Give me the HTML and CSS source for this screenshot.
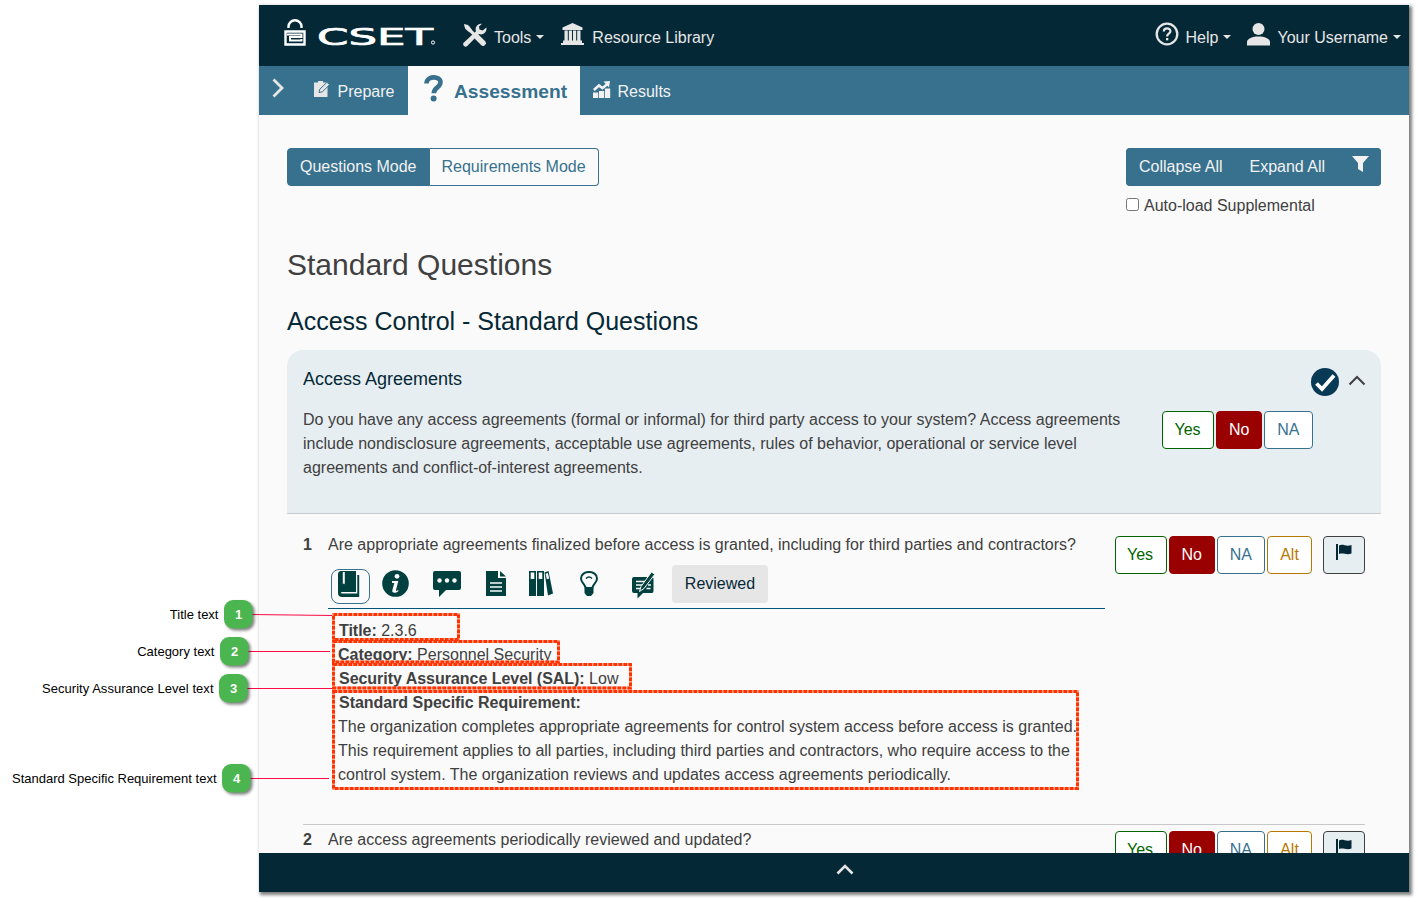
FILE: index.html
```html
<!DOCTYPE html>
<html lang="en">
<head>
<meta charset="utf-8">
<title>CSET</title>
<link rel="stylesheet" href="styles.css">
</head>
<body>
<div class="app">
  <header class="topbar">
    <svg class="lock" width="22" height="28" viewBox="0 0 22 28"><path d="M4.500 9V7.500a6.500 6.300 0 0 1 13 0V9" fill="none" stroke="#fff" stroke-width="2.400"/><path d="M1.500 12.500H20.500V25.500H1.500z" fill="none" stroke="#fff" stroke-width="2.400"/><path d="M3 15.500H17.500V18H6V21.500H17.500V20" fill="none" stroke="#fff" stroke-width="2"/></svg>
    <svg class="logo" width="120" height="24" viewBox="0 0 120 24"><text class="logo-text" x="-1" y="19" textLength="116" lengthAdjust="spacingAndGlyphs">CSET</text><circle cx="115" cy="16.500" r="1.600" fill="none" stroke="#fff"/></svg>
    <a class="menu tools">
      <svg width="24" height="24" viewBox="0 0 24 24"><path d="M1 1l4 1 3 4 12.500 12.500 2.500 2-2.500 2.500-2.500-2.500L5.500 8 2 5z" fill="#e6e6e6"/><path d="M19 .8a5.500 5.500 0 0 0-6 7.400L.9 19.400a2.400 2.400 0 0 0 3.600 3.400L16 11a5.500 5.500 0 0 0 7.300-6.500L19.700 7.600 16.500 6.600 16 3.500z" fill="#e6e6e6"/><path d="M1.500 2l4.500 1 3 4-2.500 2.500L2.500 6z" fill="#e6e6e6"/><path d="M14 14l6 6" stroke="#e6e6e6" stroke-width="5.500" stroke-linecap="round"/></svg>
      <span>Tools</span><i class="caret"></i>
    </a>
    <a class="menu library">
      <svg width="23" height="22" viewBox="0 0 23 22"><path d="M11.500 0L21.500 4.500V7H1.500V4.500zM3.500 7.500h3.300v10H3.500zM7.800 7.500h3.200v10H7.800zM12 7.500h3.200v10H12zM16.200 7.500h3.300v10h-3.300zM2 17.500h19V20H2zM0 20h23v2H0z" fill="#e6e6e6"/></svg>
      <span>Resource Library</span>
    </a>
    <div class="topbar-right">
      <a class="menu help">
        <svg width="24" height="24" viewBox="0 0 24 24"><circle cx="12" cy="12" r="10.300" fill="none" stroke="#e6e6e6" stroke-width="2.300"/><path d="M8.800 9.500c0-4.300 6.600-4.100 6.600-.3 0 2.600-3.300 2.500-3.300 5.300" fill="none" stroke="#e6e6e6" stroke-width="2.200"/><path d="M11 16h2.300v2.300H11z" fill="#e6e6e6"/></svg>
        <span>Help</span><i class="caret"></i>
      </a>
      <a class="menu user">
        <svg width="23" height="23" viewBox="0 0 23 23"><circle cx="11.500" cy="6" r="6" fill="#e6e6e6"/><path d="M0 22.500V19c0-7.500 23-7.500 23 0v3.500z" fill="#e6e6e6"/></svg>
        <span>Your Username</span><i class="caret"></i>
      </a>
    </div>
  </header>
  <nav class="tabs">
    <svg class="expand" width="12" height="20" viewBox="0 0 12 20"><path d="M1.500 1.500L10 10 1.500 18.500" fill="none" stroke="#e6e6e6" stroke-width="2.800"/></svg>
    <a class="tab prepare">
      <svg width="17" height="16" viewBox="0 0 17 16"><path d="M0 1.500h4V0h5v1.500h4.500V16H0z" fill="#e6e6e6"/><path d="M5 11.500l.8-3.300L13 1.300l2.600 2.400L8.400 10.800z" fill="#e6e6e6" stroke="#37718e" stroke-width="1"/></svg>
      <span>Prepare</span>
    </a>
    <a class="tab active">
      <svg width="19" height="27" viewBox="0 0 19 27"><path d="M2.500 8.500C2.500 .5 16.500 .5 16.500 7.300c0 5.200-6.700 5-6.700 11" fill="none" stroke="#37718e" stroke-width="4.600"/><circle cx="9.600" cy="23.500" r="3" fill="#37718e"/></svg>
      <span>Assessment</span>
    </a>
    <a class="tab results">
      <svg width="18" height="17" viewBox="0 0 18 17"><path d="M0 11.500h5.200V17H0zM6 10h5.200v7H6zM12 7.500h5.200V17H12z" fill="#f2f2f2"/><path d="M.8 9L6 4.500l3.500 2.700L14.500 3" fill="none" stroke="#f2f2f2" stroke-width="2.600"/><path d="M10.500 .6L17 0 16 6.500z" fill="#f2f2f2"/></svg>
      <span>Results</span>
    </a>
  </nav>
  <main class="content">
    <div class="toolbar">
      <div class="group"><button class="btn solid left">Questions Mode</button><button class="btn outline right">Requirements Mode</button></div>
      <div class="toolbar-right">
        <div class="group"><button class="btn solid left">Collapse All</button><button class="btn solid mid">Expand All</button><button class="btn solid right"><svg class="funnel" width="17" height="16" viewBox="0 0 17 16"><path d="M0 0h17L11 7v9L6 13V7z" fill="#f2f2f2"/></svg></button></div>
        <label class="auto"><input type="checkbox" class="check">Auto-load Supplemental</label>
      </div>
    </div>
    <h1 class="title">Standard Questions</h1>
    <h2 class="subtitle">Access Control - Standard Questions</h2>
    <section class="card">
      <div class="card-head">
        <h3 class="card-title">Access Agreements</h3>
        <div class="card-icons">
          <svg width="28" height="28" viewBox="0 0 28 28"><circle cx="14" cy="14" r="14" fill="#083a56"/><path d="M5.500 15.500l5.500 5.500L23 7.500" fill="none" stroke="#fff" stroke-width="3.800"/></svg>
          <svg class="up" width="18" height="11" viewBox="0 0 18 11"><path d="M1.500 9.500L9 2l7.500 7.500" fill="none" stroke="#404040" stroke-width="2"/></svg>
        </div>
      </div>
      <div class="card-body">
        <p class="card-text">Do you have any access agreements (formal or informal) for third party access to your system? Access agreements include nondisclosure agreements, acceptable use agreements, rules of behavior, operational or service level agreements and conflict-of-interest agreements.</p>
        <div class="answers"><button class="btn ans yes">Yes</button><button class="btn ans no">No</button><button class="btn ans na">NA</button></div>
      </div>
    </section>
    <section class="question first">
      <b class="num">1</b>
      <div class="q-main">
        <p class="q-text">Are appropriate agreements finalized before access is granted, including for third parties and contractors?</p>
        <div class="icons">
          <span class="book"><svg width="22" height="27" viewBox="0 0 22 27"><path d="M3 0h15v21H4c-1.500 0-1.500 1.500 0 1.500h15.300V4h1.900v22H4c-2.500 0-4-1.500-4-4V3c0-1.500 1-3 3-3z" fill="#00403f"/><path d="M4.800 1v12.500c.5-1.500 1.500-1.500 2 0V1" fill="#fafafa"/></svg></span>
          <svg class="i-info" width="27" height="27" viewBox="0 0 27 27"><circle cx="13.500" cy="13.500" r="13.300" fill="#00403f"/><circle cx="15" cy="6.300" r="2.400" fill="#fafafa"/><path d="M10 11h6.300l-2.300 9c-.4 1.400.8 1 2.300-.3v1.500c-3 2.300-6.700 2-6-.9l2-7.300H10z" fill="#fafafa"/></svg>
          <svg class="i-comment" width="28" height="26" viewBox="0 0 28 26"><path d="M2 0h24q2 0 2 2v15q0 2-2 2H13L6 26V19H2q-2 0-2-2V2Q0 0 2 0z" fill="#00403f"/><circle cx="6.500" cy="9.500" r="2.200" fill="#fafafa"/><circle cx="14" cy="9.500" r="2.200" fill="#fafafa"/><circle cx="21.500" cy="9.500" r="2.200" fill="#fafafa"/></svg>
          <svg class="i-file" width="20" height="25" viewBox="0 0 20 25"><path d="M0 0h12v7h8v18H0zM14 0l6 5.500h-6z" fill="#00403f"/><path d="M4 12h12M4 16h12M4 20h12" stroke="#fafafa" stroke-width="1.400"/></svg>
          <svg class="i-books" width="24" height="25" viewBox="0 0 24 25"><path d="M0 0h7v25H0zM8 0h7v25H8z" fill="#00403f"/><path d="M15.500 1.500L19.500 0 24 22.500 19 24.500z" fill="#00403f"/><path d="M1.700 1.500h3.600v6.500H1.700zM9.700 1.500h3.600v6.500H9.700zM16.600 2.800l2.300-.9 1.300 5.500-2.400.9z" fill="#fafafa"/></svg>
          <svg class="i-bulb" width="18" height="25" viewBox="0 0 18 25"><path d="M5.500 17c0-4-4.500-5-4.500-9.500C1-1.200 17-1.200 17 7.500c0 4.500-4.500 5.500-4.500 9.500z" fill="none" stroke="#00403f" stroke-width="2"/><path d="M4.500 17.500h9V22L11 25H7l-2.500-3z" fill="#00403f"/><path d="M6 7.500q3-3 6 0" fill="none" stroke="#00403f" stroke-width="1.600"/></svg>
          <svg class="i-review" width="23" height="28" viewBox="0 0 23 28"><path d="M2 6h18q1.500 0 1.500 2v12q0 2-1.500 2h-9l-5.500 5.500V22H2q-2 0-2-2V8q0-2 2-2z" fill="#00403f"/><path d="M4 10.500h11M4 14h8M4 17.500h6M14.500 17.500h4M16 14h3" stroke="#fafafa" stroke-width="1.300"/><path d="M7.500 20.500L9 15.500 19.500 1l3.300 2.300L12 17.500z" fill="#00403f" stroke="#fafafa" stroke-width="1"/></svg>
          <button class="reviewed">Reviewed</button>
        </div>
        <div class="details">
          <p class="row shift"><b>Title:</b> 2.3.6</p>
          <p class="row"><b>Category:</b> Personnel Security</p>
          <p class="row shift"><b>Security Assurance Level (SAL):</b> Low</p>
          <p class="row shift"><b>Standard Specific Requirement:</b></p>
          <p class="row">The organization completes appropriate agreements for control system access before access is granted.<br>This requirement applies to all parties, including third parties and contractors, who require access to the<br>control system. The organization reviews and updates access agreements periodically.</p>
        </div>
      </div>
      <div class="answers"><button class="btn ans yes">Yes</button><button class="btn ans no">No</button><button class="btn ans na">NA</button><button class="btn ans alt">Alt</button><button class="btn flag"><svg width="16" height="16" viewBox="0 0 16 16"><path d="M0 0h2v16H0zM3 1.500c4-2 7 1.500 12.500-.5v8.500c-5 2-8-1-12.500 .5z" fill="#052836"/></svg></button></div>
    </section>
    <section class="question second">
      <b class="num">2</b>
      <div class="q-main"><p class="q-text">Are access agreements periodically reviewed and updated?</p></div>
      <div class="answers"><button class="btn ans yes">Yes</button><button class="btn ans no">No</button><button class="btn ans na">NA</button><button class="btn ans alt">Alt</button><button class="btn flag"><svg width="16" height="16" viewBox="0 0 16 16"><path d="M0 0h2v16H0zM3 1.500c4-2 7 1.500 12.500-.5v8.500c-5 2-8-1-12.500 .5z" fill="#052836"/></svg></button></div>
    </section>
  </main>
  <footer class="bottombar"><svg width="18" height="11" viewBox="0 0 18 11"><path d="M1.500 9.500L9 2l7.500 7.500" fill="none" stroke="#e6e6e6" stroke-width="2.600"/></svg></footer>
</div>
<svg class="callouts" width="1418" height="902" viewBox="0 0 1418 902">
  <g class="leader"><path d="M251 614.500L332 615.500M247 651.500H330M246 688.500H332M249 778.500H329"/></g>
  <g class="box-base"><rect x="333.500" y="614.500" width="125" height="25"/><rect x="333.500" y="641.500" width="225" height="20.500"/><rect x="333.500" y="664.500" width="297" height="23.500"/><rect x="333.500" y="691.500" width="744" height="97"/></g>
  <g class="box-dash"><rect x="333.500" y="614.500" width="125" height="25"/><rect x="333.500" y="641.500" width="225" height="20.500"/><rect x="333.500" y="664.500" width="297" height="23.500"/><rect x="333.500" y="691.500" width="744" height="97"/></g>
  <g class="badge"><rect x="224" y="600" width="28.500" height="28.500" rx="9"/><rect x="220" y="637" width="28.500" height="28.500" rx="9"/><rect x="219" y="674" width="28.500" height="28.500" rx="9"/><rect x="222" y="764" width="28.500" height="28.500" rx="9"/></g>
  <g class="badge-num"><text x="238.500" y="619">1</text><text x="234.500" y="656">2</text><text x="233.500" y="693">3</text><text x="236.500" y="783">4</text></g>
  <g class="label"><text x="218.500" y="619">Title text</text><text x="214.500" y="656">Category text</text><text x="213.500" y="693" textLength="171.500">Security Assurance Level text</text><text x="216.500" y="783">Standard Specific Requirement text</text></g>
</svg>
</body>
</html>
```
FILE: styles.css
```css
* { box-sizing: border-box; }
body { margin: 0; width: 1418px; height: 902px; overflow: hidden; background: #fff; padding: 5px 0 0 259px; font: 16px/24px "Liberation Sans", Arial, sans-serif; color: #404040; }
h1, h2, h3, p { margin: 0; font-weight: 400; }
svg { display: block; flex: none; }
.app { width: 1150px; height: 887px; display: flex; flex-direction: column; background: #fafafa; box-shadow: 2px 2px 3px 1px rgba(0,0,0,.5); }
.topbar { height: 61px; flex: none; background: #052836; color: #e6e6e6; display: flex; align-items: flex-start; padding: 14px 8px 0 25px; }
.logo { margin: 7px 0 0 12px; overflow: visible; }
.logo-text { font: 23.500px "DejaVu Sans", sans-serif; fill: #fff; stroke: #fff; stroke-width: .7px; }
.menu { display: flex; align-items: flex-start; }
.menu span { margin-top: 7px; white-space: nowrap; }
.menu svg { margin-top: 4px; }
.caret { margin: 16px 0 0 5px; border: 4.500px solid transparent; border-top-color: #e6e6e6; border-bottom: 0; }
.tools { margin-left: 25px; }
.tools span { margin-left: 7px; }
.library { margin-left: 17px; }
.library span { margin-left: 8px; }
.topbar-right { margin-left: auto; display: flex; }
.help svg { margin-top: 3px; }
.help span { margin-left: 7px; }
.user { margin-left: 16px; }
.user span { margin-left: 7px; }
.tabs { height: 49px; flex: none; background: #37718e; color: #f2f2f2; display: flex; }
.expand { margin: 12px 0 0 13px; }
.tab { display: flex; align-items: flex-start; height: 49px; }
.tab span { margin-top: 14px; }
.prepare { width: 124px; padding-left: 30px; }
.prepare svg { margin: 15px 6.500px 0 0; }
.active { width: 172px; padding-left: 16px; background: #fafafa; color: #37718e; font-size: 19.200px; font-weight: 700; }
.active svg { margin: 9px 11px 0 0; }
.results { padding-left: 13px; }
.results svg { margin: 15px 6.500px 0 0; }
.content { flex: 1; min-height: 0; overflow: hidden; padding: 33px 28px 0; }
.toolbar { display: flex; justify-content: space-between; height: 99px; }
.group { display: flex; height: 38px; }
.btn { font: inherit; height: 38px; padding: 0 12px; border: 1px solid #37718e; border-radius: 4px; margin: 0; line-height: 36px; white-space: nowrap; }
.solid { background: #37718e; color: #f2f2f2; }
.outline { background: #fafafa; color: #37718e; border-left: 0; }
.left { border-radius: 4px 0 0 4px; }
.mid { border-radius: 0; }
.right { border-radius: 0 4px 4px 0; }
.toolbar-right { width: 255px; }
.toolbar-right .group { justify-content: space-between; background: #37718e; border-radius: 4px; }
.toolbar-right .right { padding-right: 11px; }
.funnel { margin-top: -6px; }
.auto { display: flex; align-items: center; margin-top: 8px; }
.check { width: 13px; height: 13px; margin: -3px 5px 0 0; }
.title { font-size: 30px; line-height: 36px; }
.subtitle { font-size: 25px; line-height: 30px; margin-top: 23px; color: #052836; }
.card { margin-top: 14px; height: 164px; background: #e7eef2; border-radius: 16px 16px 0 0; border-bottom: 1px solid #c8cccd; padding: 16px 15px 0 16px; }
.card-head { display: flex; justify-content: space-between; height: 42px; }
.card-title { font-size: 18px; line-height: 26px; color: #052836; }
.card-icons { display: flex; padding-top: 2px; }
.up { margin: 7px 0 0 9px; }
.card-body { display: flex; }
.card-text { width: 829px; }
.answers { display: flex; gap: 2px; flex: none; align-self: flex-start; }
.card-body .answers { margin: 3px 0 0 30px; }
.ans { background: #fff; }
.yes { width: 52px; padding: 0 1px 0 0; color: #006400; border-color: #006400; }
.no { width: 46px; background: #900; color: #fff; border-color: #900; }
.na { width: 48.500px; padding: 0; color: #37718e; }
.alt { width: 45px; padding: 0; color: #b87800; border-color: #b87800; }
.flag { width: 42px; margin-left: 9px; background: #e7eef2; border-color: #404040; }
.flag svg { margin-top: -7px; }
.question { display: flex; margin: 0 16px; }
.num { width: 25px; }
.q-main { width: 787px; }
.first { height: 292px; margin-top: 19px; }
.first .answers { margin-top: 3px; }
.second { border-top: 1px solid #c8c8c8; margin-top: -1px; height: 60px; padding-top: 3px; }
.second .answers { margin-top: 3px; }
.icons { display: flex; align-items: flex-start; width: 777px; height: 52px; padding: 8px 0 0 3px; border-bottom: 1px solid #00557a; }
.book { width: 39px; height: 35px; margin-top: 4px; border: 1px solid #37718e; border-radius: 8px; padding: 1px 0 0 6px; }
.i-info { margin: 5px 0 0 12.500px; }
.i-comment { margin: 6px 0 0 23.500px; }
.i-file { margin: 6px 0 0 25px; }
.i-books { margin: 6px 0 0 23px; }
.i-bulb { margin: 6px 0 0 27px; }
.i-review { margin: 6px 0 0 34px; }
.reviewed { width: 96px; height: 38px; margin-left: 17px; border: 0; border-radius: 4px; background: #e6e6e6; font: inherit; color: #052836; }
.details { padding: 10px 0 0 10px; white-space: nowrap; }
.shift { padding-left: 1px; }
.shift b { letter-spacing: -.03px; }
.bottombar { height: 39px; flex: none; background: #052836; display: flex; justify-content: center; padding: 11px 0 0 21px; }
.callouts { position: absolute; left: 0; top: 0; }
.leader { stroke: #ff0a46; stroke-width: 1; fill: none; }
.box-base { stroke: #ff9f88; stroke-width: 3; fill: none; }
.box-dash { stroke: #ff3300; stroke-width: 3; fill: none; stroke-dasharray: 3.500 1.500; }
.badge { fill: #4bb54f; filter: drop-shadow(2px 2px 1.500px rgba(0,0,0,.5)); }
.badge-num { font: bold 13px "Liberation Sans", sans-serif; fill: #fff; text-anchor: middle; }
.label { font: 13px "Liberation Sans", sans-serif; fill: #000; text-anchor: end; }
```
